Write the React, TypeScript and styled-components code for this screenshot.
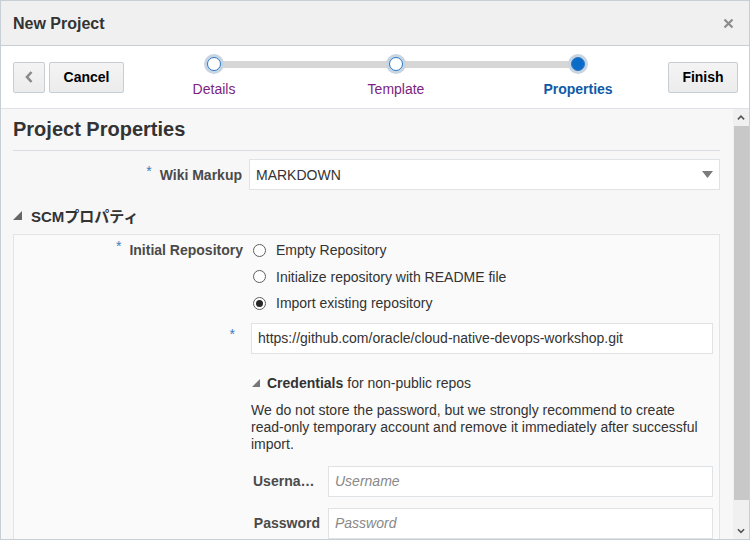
import React from "react";
import styled, { createGlobalStyle } from "styled-components";

const GlobalStyle = createGlobalStyle`
  html, body {
    margin: 0;
    padding: 0;
    background: #fff;
  }
  body {
    font-family: "Liberation Sans", Arial, "Noto Sans CJK JP", sans-serif;
    color: #333;
  }
  * {
    box-sizing: border-box;
  }
`;

const Dialog = styled.div`
  width: 750px;
  height: 540px;
  border: 1px solid #c7cfd6;
  display: flex;
  flex-direction: column;
  overflow: hidden;
  background: #fff;
`;

const Header = styled.div`
  flex: none;
  height: 45px;
  display: flex;
  align-items: center;
  justify-content: space-between;
  padding: 1px 15px 0 12px;
  background: #f0f0f0;
  border-bottom: 1px solid #c7cfd6;
`;

const Title = styled.div`
  font-size: 16px;
  font-weight: bold;
  color: #333;
`;

const Toolbar = styled.div`
  flex: none;
  height: 63px;
  display: flex;
  align-items: center;
  padding: 0 11px 0 12px;
  background: #fff;
  border-bottom: 1px solid #dfe3e7;
`;

const Button = styled.button<{ $w: number }>`
  width: ${(p) => p.$w}px;
  height: 31px;
  padding: 0;
  display: flex;
  align-items: center;
  justify-content: center;
  background: linear-gradient(#f4f4f4, #ececec);
  border: 1px solid #c6cdd3;
  border-radius: 2px;
  font-family: inherit;
  font-size: 14px;
  font-weight: bold;
  color: #000;
  & + & {
    margin-left: 4px;
  }
`;

const StepperArea = styled.div`
  flex: 1;
  align-self: flex-start;
  display: flex;
  justify-content: center;
  padding-top: 11px;
`;

const Stepper = styled.div`
  width: 364px;
  display: flex;
  align-items: flex-start;
`;

const Step = styled.div`
  width: 0;
  display: flex;
  flex-direction: column;
  align-items: center;
  position: relative;
  z-index: 1;
`;

const Circle = styled.div<{ $active?: boolean }>`
  flex: none;
  width: 14px;
  height: 14px;
  border-radius: 50%;
  border: 1.5px solid #2a78c4;
  background: ${(p) => (p.$active ? "#0a6cc9" : "#fff")};
  box-shadow: 0 0 0 3px #c7d5e3;
`;

const StepLabel = styled.div<{ $active?: boolean }>`
  margin-top: 10px;
  white-space: nowrap;
  font-size: 14px;
  line-height: 16px;
  color: ${(p) => (p.$active ? "#0f5ba7" : "#7b1f82")};
  font-weight: ${(p) => (p.$active ? "bold" : "normal")};
`;

const Connector = styled.div`
  flex: 1;
  height: 7px;
  margin-top: 3.5px;
  background: #d6d6d6;
`;

const Body = styled.div`
  flex: 1;
  min-height: 0;
  display: flex;
`;

const Content = styled.div`
  flex: 1;
  min-width: 0;
  overflow: hidden;
  padding: 8px 13px 0 12px;
  background: #f7f7f7;
`;

const Heading = styled.h1`
  margin: 0;
  font-size: 20px;
  line-height: 24px;
  font-weight: bold;
  color: #333;
  padding-bottom: 9px;
  border-bottom: 1px solid #d9dde1;
`;

const FormRow = styled.div<{ $label: number; $gap: number; $top?: number }>`
  display: grid;
  grid-template-columns: ${(p) => p.$label}px 1fr;
  column-gap: ${(p) => p.$gap}px;
  margin-top: ${(p) => p.$top ?? 0}px;
`;

const Label = styled.div<{ $h?: number }>`
  height: ${(p) => p.$h ?? 31}px;
  display: flex;
  align-items: center;
  justify-content: flex-end;
  font-size: 14px;
  font-weight: bold;
  color: #4a4a4a;
  white-space: nowrap;
`;

const Required = styled.span`
  color: #3a7ac0;
  font-size: 14px;
  font-weight: normal;
  margin-right: 8px;
  position: relative;
  top: -4px;
`;

const ShortLabel = styled.div`
  height: 31px;
  line-height: 31px;
  padding-left: 2px;
  font-size: 14px;
  font-weight: bold;
  color: #4a4a4a;
  text-align: right;
  white-space: nowrap;
  overflow: hidden;
  text-overflow: ellipsis;
`;

const Field = styled.div`
  height: 31px;
  display: flex;
  align-items: center;
  justify-content: space-between;
  padding: 0 6px;
  background: #fff;
  border: 1px solid #dfe3e6;
  font-size: 14px;
  color: #333;
  white-space: nowrap;
  overflow: hidden;
`;

const Placeholder = styled.span`
  font-style: italic;
  color: #888;
`;

const SectionTitle = styled.div`
  margin-top: 16px;
  display: flex;
  align-items: center;
  height: 18px;
  font-size: 15px;
  font-weight: bold;
  color: #333;
  & svg {
    margin-right: 9px;
  }
`;

const SectionBox = styled.div`
  margin-top: 10px;
  padding: 2px 6px 40px 0;
  background: #fafafa;
  border: 1px solid #e4e4e4;
`;

const RadioList = styled.div`
  display: flex;
  flex-direction: column;
`;

const RadioRow = styled.label`
  height: 26.5px;
  display: flex;
  align-items: center;
  padding-left: 2px;
  font-size: 14px;
  color: #333;
`;

const RadioDot = styled.span<{ $checked?: boolean }>`
  flex: none;
  width: 13px;
  height: 13px;
  margin-right: 10px;
  border-radius: 50%;
  border: 1px solid #5f5f5f;
  background: #fff;
  display: flex;
  align-items: center;
  justify-content: center;
  &::after {
    content: "";
    width: 7px;
    height: 7px;
    border-radius: 50%;
    background: ${(p) => (p.$checked ? "#262626" : "transparent")};
  }
`;

const SubTitle = styled.div`
  margin-top: 21px;
  height: 16px;
  display: flex;
  align-items: center;
  font-size: 14px;
  color: #333;
  & svg {
    margin: 0 7px 0 1px;
  }
  & b {
    margin-right: 4px;
  }
`;

const Note = styled.p`
  margin: 11px 0 0;
  max-width: 456px;
  font-size: 14px;
  line-height: 17px;
  color: #333;
`;

const ScrollRail = styled.div`
  flex: none;
  width: 16px;
  display: flex;
  flex-direction: column;
  background: #f0f0f0;
`;

const RailArrow = styled.div`
  flex: none;
  height: 17px;
  display: flex;
  align-items: center;
  justify-content: center;
`;

const RailThumb = styled.div`
  flex: none;
  height: 374px;
  margin: 0 0 0 1px;
  background: #c8c8c8;
`;

const RailSpace = styled.div`
  flex: 1;
`;

const Chevron = ({ dir, color = "#555", size = 8 }: { dir: "up" | "down"; color?: string; size?: number }) => {
  const pts = dir === "up" ? "1,6 4.5,2.5 8,6" : "1,2.5 4.5,6 8,2.5";
  return (
    <svg width={size} height={size} viewBox="0 0 9 9">
      <polyline points={pts} fill="none" stroke={color} strokeWidth="1.8" />
    </svg>
  );
};

const CloseIcon = () => (
  <svg width="11" height="11" viewBox="0 0 11 11">
    <path d="M1.5 1.5 L9.5 9.5 M9.5 1.5 L1.5 9.5" stroke="#8c8c8c" strokeWidth="2.2" />
  </svg>
);

const Caret = ({ size = 9, color = "#666" }: { size?: number; color?: string }) => (
  <svg width={size} height={size} viewBox="0 0 9 9">
    <polygon points="9,0 9,9 0,9" fill={color} />
  </svg>
);

const DropArrow = () => (
  <svg width="11" height="7" viewBox="0 0 11 7">
    <polygon points="0,0 11,0 5.5,7" fill="#7b7b7b" />
  </svg>
);

const steps = [
  { name: "Details" },
  { name: "Template" },
  { name: "Properties", active: true },
];

export default function App() {
  return (
    <>
      <GlobalStyle />
      <Dialog>
        <Header>
          <Title>New Project</Title>
          <CloseIcon />
        </Header>
        <Toolbar>
          <Button $w={32}>
            <svg width="10" height="14" viewBox="0 0 10 14">
              <polyline points="7.5,2 3,7 7.5,12" fill="none" stroke="#8a8a8a" strokeWidth="2.6" />
            </svg>
          </Button>
          <Button $w={75}>Cancel</Button>
          <StepperArea>
            <Stepper>
              {steps.map((s, i) => (
                <React.Fragment key={s.name}>
                  {i > 0 && <Connector />}
                  <Step>
                    <Circle $active={s.active} />
                    <StepLabel $active={s.active}>{s.name}</StepLabel>
                  </Step>
                </React.Fragment>
              ))}
            </Stepper>
          </StepperArea>
          <Button $w={70}>Finish</Button>
        </Toolbar>
        <Body>
          <Content>
            <Heading>Project Properties</Heading>
            <FormRow $label={229} $gap={7} $top={8}>
              <Label>
                <Required>*</Required>Wiki Markup
              </Label>
              <Field>
                MARKDOWN
                <DropArrow />
              </Field>
            </FormRow>
            <SectionTitle>
              <Caret />
              SCMプロパティ
            </SectionTitle>
            <SectionBox>
              <FormRow $label={229} $gap={8}>
                <Label $h={26.5}>
                  <Required>*</Required>Initial Repository
                </Label>
                <RadioList>
                  <RadioRow>
                    <RadioDot />
                    Empty Repository
                  </RadioRow>
                  <RadioRow>
                    <RadioDot />
                    Initialize repository with README file
                  </RadioRow>
                  <RadioRow>
                    <RadioDot $checked />
                    Import existing repository
                  </RadioRow>
                </RadioList>
              </FormRow>
              <FormRow $label={229} $gap={8} $top={6}>
                <Label>
                  <Required>*</Required>
                </Label>
                <Field>https://github.com/oracle/cloud-native-devops-workshop.git</Field>
              </FormRow>
              <FormRow $label={229} $gap={8}>
                <div />
                <div>
                  <SubTitle>
                    <Caret size={8} color="#777" />
                    <b>Credentials</b>for non-public repos
                  </SubTitle>
                  <Note>
                    We do not store the password, but we strongly recommend to create read-only temporary
                    account and remove it immediately after successful import.
                  </Note>
                  <FormRow $label={69} $gap={8} $top={13}>
                    <ShortLabel>Username</ShortLabel>
                    <Field>
                      <Placeholder>Username</Placeholder>
                    </Field>
                  </FormRow>
                  <FormRow $label={69} $gap={8} $top={11}>
                    <ShortLabel>Password</ShortLabel>
                    <Field>
                      <Placeholder>Password</Placeholder>
                    </Field>
                  </FormRow>
                </div>
              </FormRow>
            </SectionBox>
          </Content>
          <ScrollRail>
            <RailArrow>
              <Chevron dir="up" />
            </RailArrow>
            <RailThumb />
            <RailSpace />
            <RailArrow>
              <Chevron dir="down" />
            </RailArrow>
          </ScrollRail>
        </Body>
      </Dialog>
    </>
  );
}
